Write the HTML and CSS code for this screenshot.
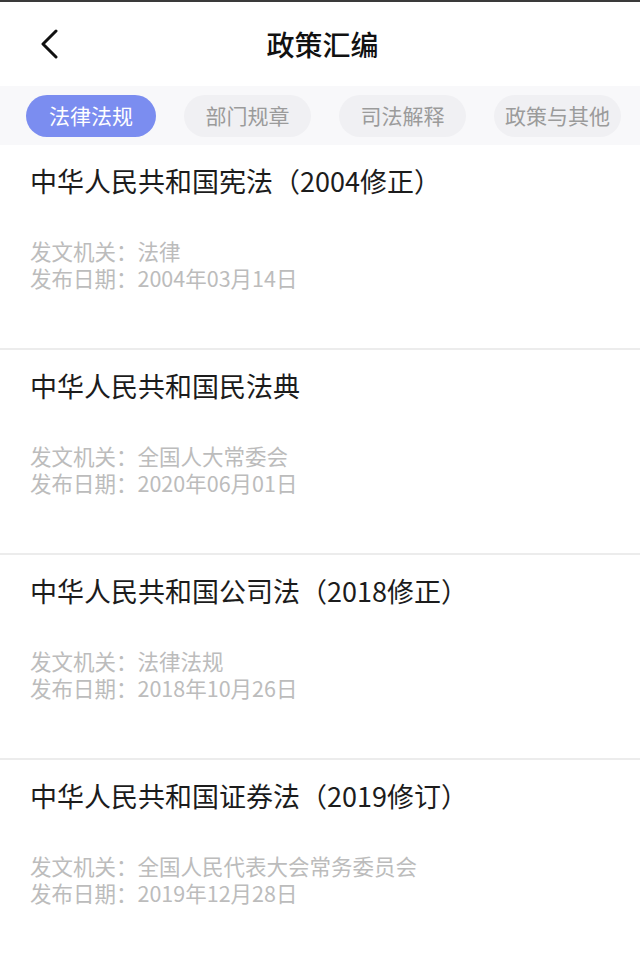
FILE: index.html
```html
<!DOCTYPE html>
<html lang="zh-CN">
<head>
<meta charset="utf-8">
<title>政策汇编</title>
<link rel="stylesheet" href="styles.css">
</head>
<body>
<div class="app">
  <header class="topbar">
    <div class="back">
      <svg width="24" height="30" viewBox="0 0 24 30" aria-hidden="true">
        <polyline points="17,2 4,15 17,28" fill="none" stroke="#111" stroke-width="3" stroke-linecap="round" stroke-linejoin="round"/>
      </svg>
    </div>
    <h1 class="title">政策汇编</h1>
    <div class="spacer"></div>
  </header>
  <nav class="tabs">
    <span class="tab active">法律法规</span>
    <span class="tab">部门规章</span>
    <span class="tab">司法解释</span>
    <span class="tab">政策与其他</span>
  </nav>
  <main class="list">
    <section class="item">
      <h2 class="item-title">中华人民共和国宪法（2004修正）</h2>
      <div class="meta">
        <p>发文机关：法律</p>
        <p>发布日期：2004年03月14日</p>
      </div>
    </section>
    <section class="item">
      <h2 class="item-title">中华人民共和国民法典</h2>
      <div class="meta">
        <p>发文机关：全国人大常委会</p>
        <p>发布日期：2020年06月01日</p>
      </div>
    </section>
    <section class="item">
      <h2 class="item-title">中华人民共和国公司法（2018修正）</h2>
      <div class="meta">
        <p>发文机关：法律法规</p>
        <p>发布日期：2018年10月26日</p>
      </div>
    </section>
    <section class="item">
      <h2 class="item-title">中华人民共和国证券法（2019修订）</h2>
      <div class="meta">
        <p>发文机关：全国人民代表大会常务委员会</p>
        <p>发布日期：2019年12月28日</p>
      </div>
    </section>
  </main>
</div>
</body>
</html>
```

FILE: styles.css
```css
html, body {
  margin: 0;
  padding: 0;
  background: #ffffff;
}
body {
  font-family: "Noto Sans CJK SC", "Noto Sans", sans-serif;
  color: #1a1a1a;
}
.app {
  border-top: 2px solid #3a3a3a;
  min-height: 955px;
  background: #ffffff;
}
.topbar {
  display: grid;
  grid-template-columns: 1fr auto 1fr;
  align-items: center;
  height: 84px;
}
.back {
  display: flex;
  align-items: center;
  padding-left: 39px;
}
.back svg {
  display: block;
}
.title {
  margin: 0;
  font-size: 28px;
  font-weight: 500;
  line-height: 40px;
  color: #111;
  padding-left: 5px;
}
.tabs {
  display: flex;
  align-items: center;
  gap: 28px;
  height: 59px;
  padding-left: 26px;
  background: #f8f8fa;
}
.tab {
  display: flex;
  align-items: center;
  justify-content: center;
  width: 127px;
  height: 42px;
  border-radius: 21px;
  background: #f0f0f3;
  color: #9b9b9b;
  font-size: 21px;
  line-height: 1;
}
.tab.active {
  width: 130px;
  background: #7b8df0;
  color: #ffffff;
}
.list {
  display: flex;
  flex-direction: column;
}
.item {
  box-sizing: border-box;
  height: 205px;
  padding: 18px 30px 0;
  border-bottom: 2px solid #ececec;
}
.item-title {
  margin: 0;
  font-size: 27px;
  font-weight: 400;
  line-height: 36px;
  color: #1c1c1c;
}
.meta {
  margin-top: 38px;
  color: #bcbcbc;
  font-size: 21.5px;
  line-height: 27px;
}
.meta p {
  margin: 0;
}
```
